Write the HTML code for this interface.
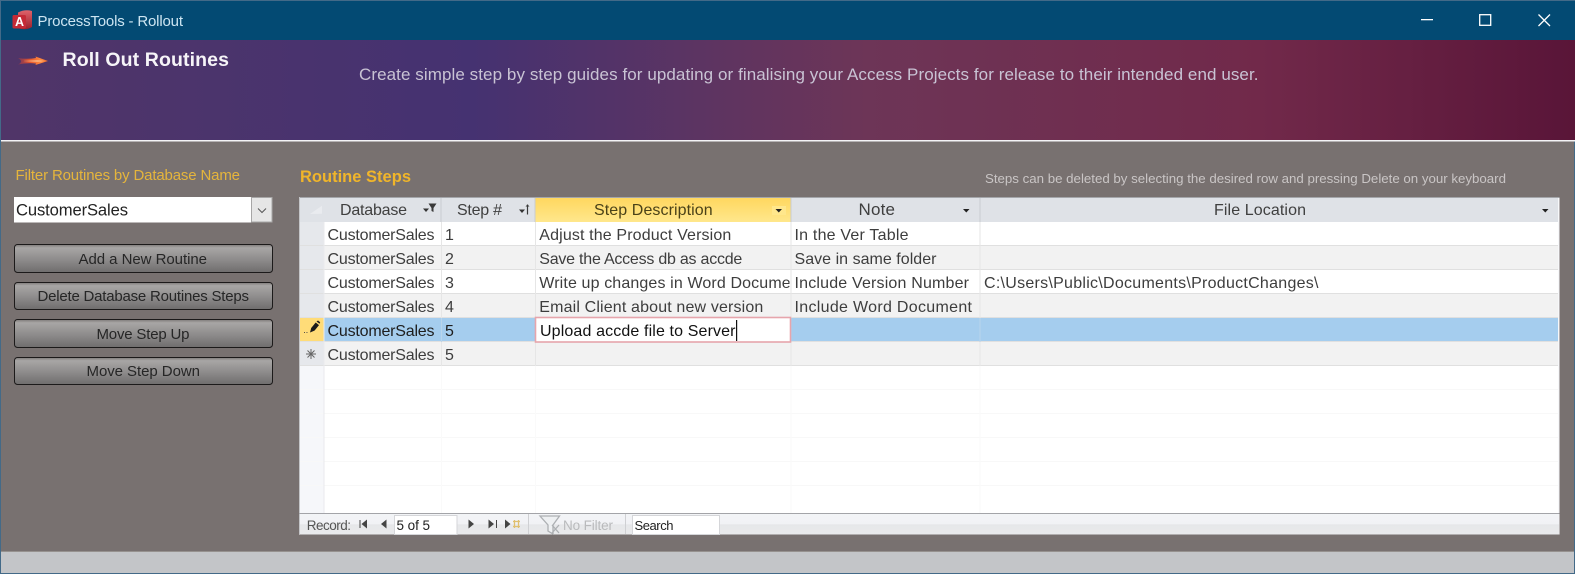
<!DOCTYPE html>
<html><head><meta charset="utf-8"><title>ProcessTools - Rollout</title>
<style>
html,body{margin:0;padding:0;background:#fff;width:1576px;height:575px;overflow:hidden}
svg{display:block}
text{font-family:"Liberation Sans",sans-serif;white-space:pre}
.c{font-size:16px;fill:#3d3d3d}
.h{font-size:16px;fill:#3f3f3f}
.b{font-size:15px;fill:#262626}
</style></head><body>
<svg width="1576" height="575" viewBox="0 0 1576 575" xmlns="http://www.w3.org/2000/svg">
<defs>
<linearGradient id="hd" x1="0" x2="1" y1="0" y2="0"><stop offset="0" stop-color="#503568"/><stop offset=".3" stop-color="#453271"/><stop offset=".55" stop-color="#6d3557"/><stop offset=".8" stop-color="#71294a"/><stop offset="1" stop-color="#591538"/></linearGradient>
<linearGradient id="btn" x1="0" x2="0" y1="0" y2="1"><stop offset="0" stop-color="#7e7a79"/><stop offset=".12" stop-color="#a8a6a5"/><stop offset=".55" stop-color="#8d8b8b"/><stop offset="1" stop-color="#6f6d6d"/></linearGradient>
<linearGradient id="act" x1="0" x2="0" y1="0" y2="1"><stop offset="0" stop-color="#ffd75f"/><stop offset="1" stop-color="#ffe78c"/></linearGradient>
<linearGradient id="nav" x1="0" x2="0" y1="0" y2="1"><stop offset="0" stop-color="#f3f4f7"/><stop offset=".5" stop-color="#f1f2f5"/><stop offset=".55" stop-color="#e6e7e9"/><stop offset="1" stop-color="#e9eaec"/></linearGradient>
<linearGradient id="fl" x1="0" x2="1" y1="0" y2="0"><stop offset="0" stop-color="#c8403a" stop-opacity=".35"/><stop offset=".4" stop-color="#e8562c"/><stop offset=".75" stop-color="#ff8a40"/><stop offset="1" stop-color="#f06a28"/></linearGradient>
<linearGradient id="fc" x1="0" x2="1" y1="0" y2="0"><stop offset="0" stop-color="#ffb070" stop-opacity=".2"/><stop offset=".6" stop-color="#ffd8a8"/><stop offset="1" stop-color="#fff0d8"/></linearGradient>
<linearGradient id="ac" x1="0" x2="0" y1="0" y2="1"><stop offset="0" stop-color="#e0626a"/><stop offset="1" stop-color="#9c1f2a"/></linearGradient>
<clipPath id="dc"><rect x="535" y="270" width="254.500" height="24"/></clipPath>
</defs>

<!-- window -->
<rect x="0" y="0" width="1575" height="574" fill="#436a88"/>
<rect x="1" y="1" width="1574" height="39" fill="#034a73"/>
<rect x="1" y="40" width="1574" height="100" fill="url(#hd)"/>
<rect x="1" y="140" width="1574" height="1.500" fill="#f4f4f6"/>
<rect x="1" y="141.500" width="1573" height="410" fill="#787170"/>
<rect x="1" y="551.500" width="1573" height="21.500" fill="#c3c5c8"/>
<rect x="1" y="551" width="1573" height="1" fill="#96928f"/>

<!-- title bar -->
<path d="M18 12.500Q25 9 32 11V27Q25 31 18 28Z" fill="url(#ac)"/>
<rect x="12.500" y="15" width="13.500" height="13.500" rx="1.500" fill="#c52a36"/>
<text x="15" y="26" fill="#fff" style="font-size:12.500px;font-weight:bold">A</text>
<text x="37.500" y="26" fill="#cde5f2" style="font-size:15px" textLength="145.500" lengthAdjust="spacing">ProcessTools - Rollout</text>
<rect x="1421" y="19" width="12" height="1.300" fill="#fff"/>
<rect x="1479.700" y="14.700" width="11" height="10.600" fill="none" stroke="#fff" stroke-width="1.300"/>
<path d="M1538.500 14.500l11.500 11.500M1550 14.500l-11.500 11.500" stroke="#fff" stroke-width="1.300" fill="none"/>

<!-- header -->
<path d="M18 58Q27 59.500 36 58L35.500 56.500L48 61L35.500 65L36 63.500Q27 62.500 18 64.500Q24 61.500 18 58Z" fill="url(#fl)"/>
<path d="M24 60.500Q33 60 45 61Q33 62 24 61.500Z" fill="url(#fc)"/>
<text x="62.500" y="66" fill="#f6f4f8" style="font-size:19.500px;font-weight:bold" textLength="166.500" lengthAdjust="spacing">Roll Out Routines</text>
<text x="359" y="80" fill="#c9c3d4" style="font-size:17px" textLength="899.500" lengthAdjust="spacing">Create simple step by step guides for updating or finalising your Access Projects for release to their intended end user.</text>

<!-- left panel -->
<text x="15.500" y="180" fill="#e5b53c" style="font-size:15px" textLength="224.500" lengthAdjust="spacing">Filter Routines by Database Name</text>
<rect x="14" y="197" width="258.500" height="25.500" fill="#fff"/>
<rect x="251" y="197" width="21.500" height="25.500" fill="#a7a6a6"/>
<rect x="252" y="198" width="19.500" height="23.500" fill="#e6e6e6"/>
<path d="M258 208.500l4 4 4-4" fill="none" stroke="#555" stroke-width="1"/>
<text x="16" y="215.500" fill="#222" style="font-size:16.600px" textLength="112" lengthAdjust="spacing">CustomerSales</text>

<rect x="14.500" y="244.500" width="258" height="28" rx="3" fill="url(#btn)" stroke="#1c1a1a"/>
<rect x="14.500" y="282.500" width="258" height="27" rx="3" fill="url(#btn)" stroke="#1c1a1a"/>
<rect x="14.500" y="319.500" width="258" height="28" rx="3" fill="url(#btn)" stroke="#1c1a1a"/>
<rect x="14.500" y="357.500" width="258" height="27" rx="3" fill="url(#btn)" stroke="#1c1a1a"/>
<text class="b" x="78.500" y="264" textLength="128.500" lengthAdjust="spacing">Add a New Routine</text>
<text class="b" x="37.500" y="301" textLength="211.500" lengthAdjust="spacing">Delete Database Routines Steps</text>
<text class="b" x="96.500" y="339" textLength="93" lengthAdjust="spacing">Move Step Up</text>
<text class="b" x="86.500" y="376" textLength="113.500" lengthAdjust="spacing">Move Step Down</text>

<!-- right labels -->
<text x="300" y="182" fill="#f0b52a" style="font-size:16.500px;font-weight:bold" textLength="111" lengthAdjust="spacing">Routine Steps</text>
<text x="985" y="183" fill="#c9c5c5" style="font-size:13.300px" textLength="521" lengthAdjust="spacing">Steps can be deleted by selecting the desired row and pressing Delete on your keyboard</text>

<!-- grid -->
<rect x="299" y="197" width="1260.500" height="337.500" fill="#fff"/>
<rect x="299" y="197" width="1260.500" height="1" fill="#a4a6aa"/>
<rect x="299" y="197" width="1" height="337" fill="#c4c5c8"/>
<rect x="300" y="198" width="1258" height="24" fill="#dfe2e7"/>
<rect x="535.500" y="198" width="255" height="24" fill="url(#act)"/>
<path d="M310 214l12-.2 0-8z" fill="#e9ebef"/>
<path d="M441 198v24M535 198v24M791 198v24M980 198v24" stroke="#c9ccd1"/>

<text class="h" x="340" y="215" textLength="67" lengthAdjust="spacing">Database</text>
<text class="h" x="457" y="215" textLength="45" lengthAdjust="spacing">Step #</text>
<text class="h" x="594" y="215" textLength="118.700" lengthAdjust="spacing" style="fill:#4a4218">Step Description</text>
<text class="h" x="858.500" y="215" textLength="36.500" lengthAdjust="spacing" style="font-size:17px">Note</text>
<text class="h" x="1214" y="215" textLength="92" lengthAdjust="spacing">File Location</text>

<!-- header filter arrows -->
<path d="M423 208.500h6l-3 3.500z" fill="#333"/><path d="M428.500 203.500h8l-3 4.500v4l-2-1v-3z" fill="#3a3a3a"/>
<path d="M519 209.500h6l-3 3.500z" fill="#333"/><path d="M527.500 204.500v10" stroke="#3a3a3a" stroke-width="1.200"/><path d="M525.500 206.500l2-2 2 2z" fill="#3a3a3a"/>
<rect x="772" y="206" width="14" height="9" fill="#ffe78c"/><path d="M775.500 209h6.500l-3.200 3.500z" fill="#222"/>
<path d="M963 209h6.500l-3.200 3.500z" fill="#222"/>
<path d="M1542 209h6.500l-3.200 3.500z" fill="#222"/>

<!-- rows -->
<rect x="300" y="222" width="24" height="291" fill="#f6f7fa"/>
<rect x="300" y="222" width="24" height="96" fill="#e6e8ec"/>
<rect x="300" y="342" width="24" height="24" fill="#e6e8ec"/>
<rect x="324" y="246" width="1234" height="24" fill="#f2f2f2"/>
<rect x="324" y="294" width="1234" height="24" fill="#f2f2f2"/>
<rect x="324" y="342" width="1234" height="24" fill="#f2f2f2"/>
<rect x="324" y="318" width="1234" height="24" fill="#a5cdee"/>
<rect x="300" y="318" width="24" height="24" fill="#ffdc78"/>
<path d="M300 245.500h1258M300 269.500h1258M300 293.500h1258M300 317.500h1258M300 341.500h1258M300 365.500h1258" stroke="#e0e0e0"/>
<path d="M300 389.500h1258M300 413.500h1258M300 437.500h1258M300 461.500h1258M300 485.500h1258" stroke="#f8f8f8"/>
<path d="M441.500 222v144M535.500 222v144M791 222v144M980 222v144" stroke="#e6e6e6"/>
<path d="M441.500 366v147M535.500 366v147M791 366v147M980 366v147" stroke="#fafafa"/>
<path d="M324 222v291" stroke="#e9eaed"/>
<path d="M441.500 318v24M980 318v24M791 318v24" stroke="#b9d5ec"/>

<!-- pencil -->
<path d="M310 332.500l1.200-4.500 4.500-5.500 3.300 2.600-4.500 5.500z" fill="#1a1a1a"/>
<path d="M316.500 321.500l1.500-1 2.200 1.800-.7 1.500z" fill="#222"/>
<path d="M304 332.500h.9M306.500 332.500h.9" stroke="#444"/>
<!-- asterisk -->
<path d="M311 349v10M306 354h10M307.500 350.500l7 7M314.500 350.500l-7 7" stroke="#666" stroke-width="1" fill="none"/>

<!-- col 1 -->
<text class="c" x="327.500" y="240" textLength="107" lengthAdjust="spacing">CustomerSales</text>
<text class="c" x="327.500" y="264" textLength="107" lengthAdjust="spacing">CustomerSales</text>
<text class="c" x="327.500" y="288" textLength="107" lengthAdjust="spacing">CustomerSales</text>
<text class="c" x="327.500" y="312" textLength="107" lengthAdjust="spacing">CustomerSales</text>
<text class="c" x="327.500" y="336" textLength="107" lengthAdjust="spacing" style="fill:#1e1e1e">CustomerSales</text>
<text class="c" x="327.500" y="360" textLength="107" lengthAdjust="spacing">CustomerSales</text>
<text class="c" x="445" y="240">1</text>
<text class="c" x="445" y="264">2</text>
<text class="c" x="445" y="288">3</text>
<text class="c" x="445" y="312">4</text>
<text class="c" x="445" y="336" style="fill:#1e1e1e">5</text>
<text class="c" x="445" y="360">5</text>
<text class="c" x="539.300" y="240" textLength="192" lengthAdjust="spacing">Adjust the Product Version</text>
<text class="c" x="539.300" y="264" textLength="203" lengthAdjust="spacing">Save the Access db as accde</text>
<text class="c" x="539.300" y="288" textLength="265" lengthAdjust="spacing" clip-path="url(#dc)">Write up changes in Word Document</text>
<text class="c" x="539.300" y="312" textLength="224" lengthAdjust="spacing">Email Client about new version</text>
<text class="c" x="794.500" y="240" textLength="114" lengthAdjust="spacing">In the Ver Table</text>
<text class="c" x="794.500" y="264" textLength="142" lengthAdjust="spacing">Save in same folder</text>
<text class="c" x="794.500" y="288" textLength="174.500" lengthAdjust="spacing">Include Version Number</text>
<text class="c" x="794.500" y="312" textLength="177.500" lengthAdjust="spacing">Include Word Document</text>
<text class="c" x="984" y="288" textLength="334.500" lengthAdjust="spacing">C:\Users\Public\Documents\ProductChanges\</text>

<!-- edit cell -->
<rect x="535.500" y="317.500" width="255" height="24.500" fill="#fff" stroke="#e6a5ac" stroke-width="1.600"/>
<text x="540" y="336" fill="#111" style="font-size:16px" textLength="195.500" lengthAdjust="spacing">Upload accde file to Server</text>
<rect x="736" y="320" width="1.200" height="21" fill="#111"/>

<!-- right edge of grid -->
<rect x="1558" y="198" width="1.500" height="336" fill="#f7f8fa"/>

<!-- nav bar -->
<rect x="300" y="513" width="1259" height="21.500" fill="url(#nav)"/>
<rect x="299" y="513" width="1260.500" height="1" fill="#a3a4a8"/>
<text x="306.700" y="530" fill="#555" style="font-size:13.500px" textLength="44.300" lengthAdjust="spacing">Record:</text>
<rect x="359.500" y="520" width="1" height="8" fill="#444"/><path d="M367 519.500v9l-5.500-4.500z" fill="#444"/>
<path d="M386.500 519.500v9l-5.500-4.500z" fill="#444"/>
<rect x="394.500" y="515.500" width="62.500" height="19" fill="#fff" stroke="#d5d6d9"/>
<text x="396.500" y="530" fill="#222" style="font-size:13.500px" textLength="33.500" lengthAdjust="spacing">5 of 5</text>
<path d="M468.500 519.500v9l5.500-4.500z" fill="#444"/>
<path d="M488.500 519.500v9l5.500-4.500z" fill="#444"/><rect x="496" y="520" width="1" height="8" fill="#444"/>
<path d="M505 519.500v9l5.500-4.500z" fill="#444"/>
<path d="M513 521.500h7M513 526.500h7M514.500 520v8M518.500 520v8" stroke="#e0c070" stroke-width="1.300"/>
<rect x="528" y="514" width="1" height="20" fill="#cfd0d3"/>
<path d="M540 516h19.500l-6.500 9v9l-5-3v-6z" fill="#eef0f2" stroke="#adb0b3" stroke-width="1.300"/>
<path d="M552 525l7 8M559 525l-7 8" stroke="#adb0b3" stroke-width="1.300"/>
<text x="563" y="530" fill="#b9babc" style="font-size:13.500px" textLength="50" lengthAdjust="spacing">No Filter</text>
<rect x="625" y="514" width="1" height="20" fill="#cfd0d3"/>
<rect x="632.500" y="515.500" width="87" height="19" fill="#fff" stroke="#d5d6d9"/>
<text x="634.500" y="530" fill="#222" style="font-size:13px" textLength="39" lengthAdjust="spacing">Search</text>
</svg>
</body></html>
